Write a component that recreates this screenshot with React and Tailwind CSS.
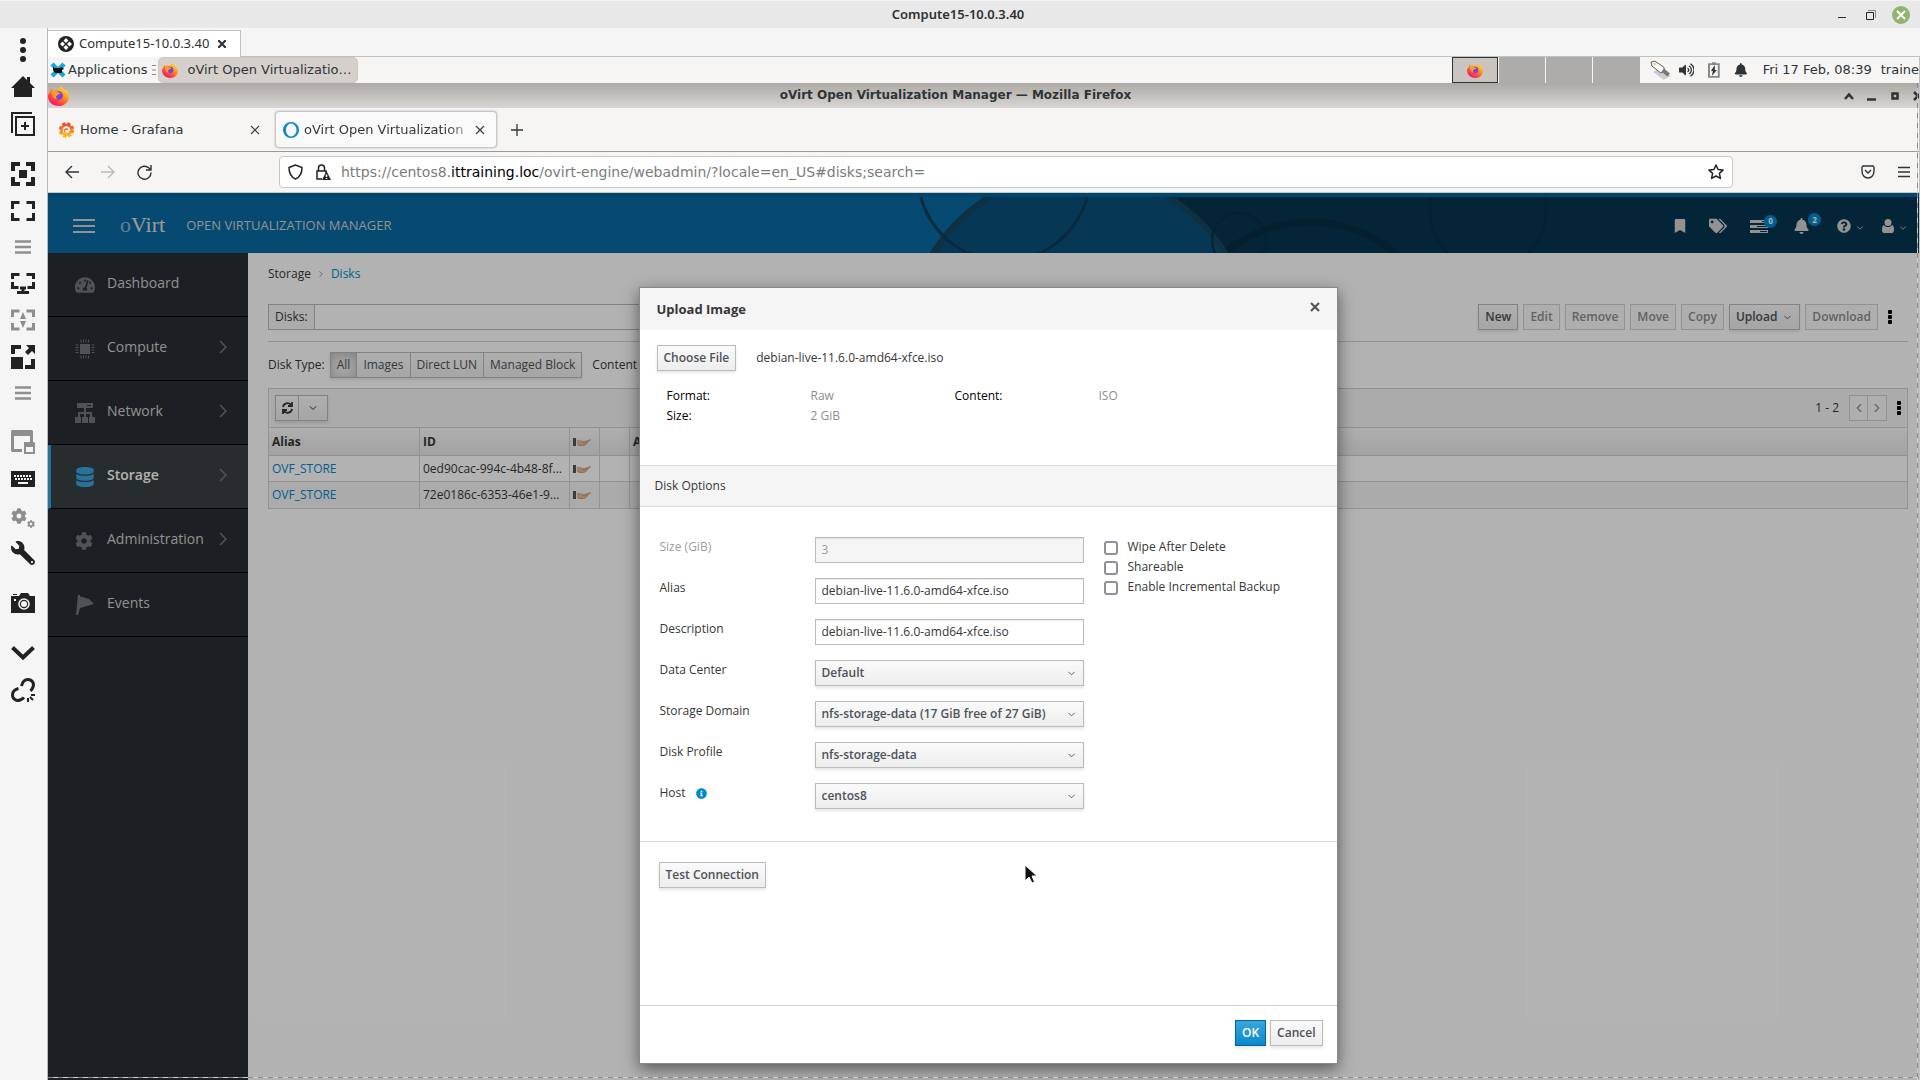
import React, { useState } from 'react';
import {
  FaBell,
  FaBookmark,
  FaCog,
  FaDatabase,
  FaInfoCircle,
  FaQuestionCircle,
  FaTachometerAlt,
  FaTags,
  FaVolumeUp,
  FaWrench,
} from 'react-icons/fa';
import { FiChevronDown, FiChevronLeft, FiChevronRight } from 'react-icons/fi';

const railGroups = [
  ['dots', 'home', 'add'],
  ['focus', 'full', 'lines', 'monitor', 'updown', 'scale', 'lines'],
  ['window', 'keyboard', 'cogs', 'wrench'],
  ['camera'],
  ['down', 'unlink'],
];

const menu = [
  { name: 'Dashboard', arrow: false },
  { name: 'Compute', arrow: true },
  { name: 'Network', arrow: true },
  { name: 'Storage', arrow: true },
  { name: 'Administration', arrow: true },
  { name: 'Events', arrow: false },
];

const disks = [
  { alias: 'OVF_STORE', id: '0ed90cac-994c-4b48-8f...' },
  { alias: 'OVF_STORE', id: '72e0186c-6353-46e1-9...' },
];

const button =
  'h-[26px] border border-[#bbb] bg-linear-to-b from-[#fafafa] to-[#ededed] px-[6px] text-xs font-semibold text-[#4d5258] shadow-[0_2px_3px_rgba(3,3,3,0.1)]';
const buttonOff = 'h-[26px] border border-[#d1d1d1] bg-[#fafafa] px-[6px] text-xs font-semibold text-[#8b8d8f]';

function RailIcon({ name }) {
  if (name === 'camera') {
    return (
      <svg width="24" height="24" viewBox="0 0 24 24" fill="#222">
        <path d="M2 3h4v1H2zM0 5h8l2-3h7l2 3h5v17H0z" />
        <circle cx="13" cy="13" r="5" fill="none" stroke="#f5f5f5" strokeWidth="1.6" />
        <circle cx="13" cy="13" r="3" fill="#f5f5f5" />
        <path fill="#f5f5f5" d="M3 8h2v2H3z" />
      </svg>
    );
  }
  if (name === 'wrench') return <FaWrench className="size-6 -scale-x-100 text-[#222]" />;
  if (name === 'cogs') {
    return (
      <span className="flex w-6 items-end">
        <FaCog className="size-4 shrink-0 self-start text-[#8e8e8e]" />
        <FaCog className="-mb-1 size-2 shrink-0 text-[#8e8e8e]" />
      </span>
    );
  }
  return (
    <svg width="24" height="24" viewBox="0 0 24 24" fill="#222">
      {name === 'dots' && (
        <>
          <circle cx="12" cy="3" r="3" />
          <circle cx="12" cy="12" r="3" />
          <circle cx="12" cy="21" r="3" />
        </>
      )}
      {name === 'home' && <path d="M0 13 12 1l4 4V2h3v6l5 5h-3v9H3v-9z" />}
      {name === 'add' && (
        <path fill="none" stroke="#222" strokeWidth="2" d="M21 1H1v20M5 5h18v18H5zM14 10v8M10 14h8" />
      )}
      {name === 'focus' && (
        <>
          <path d="M8 8h8v8H8z" />
          <path fill="none" stroke="#222" strokeWidth="4" d="M2 9V2h7M15 2h7v7M22 15v7h-7M9 22H2v-7" />
        </>
      )}
      {name === 'full' && (
        <path fill="none" stroke="#222" strokeWidth="3" d="M1.500 10V3.500h7M15.500 3.500h7V10M22.500 14v6.500h-7M8.500 20.500h-7V14" />
      )}
      {name === 'lines' && <path stroke="#8e8e8e" strokeWidth="2.500" d="M4 6.500h16M4 12h16M4 17.500h16" />}
      {name === 'monitor' && (
        <path fill="none" stroke="#222" strokeWidth="3" d="M1.500 8V3.500h7M15.500 3.500h7V8M22.500 11v5.500h-6M7.500 16.500h-6V11M12 16v6M6 21.500h12M9 17h6" />
      )}
      {name === 'updown' && (
        <>
          <path fill="none" stroke="#8e8e8e" strokeWidth="3" d="M1.500 9V3h7M15.500 3h7v6M22.500 15v6h-7M8.500 21h-7v-6" />
          <path fill="#8e8e8e" d="m12 4 3 7H9zM12 20l3-7H9z" />
        </>
      )}
      {name === 'scale' && (
        <>
          <path d="M0 12h12v12H0zM15 0h9v9l-3-3-4 4-3-3 4-4z" />
          <path fill="none" stroke="#222" strokeWidth="4" d="M2 9V2h8M22 14v8h-8" />
        </>
      )}
      {name === 'window' && (
        <>
          <path fill="#8e8e8e" d="M1 0h20l1 1v11h-3V6H3v13h8v3H1l-1-1V1z" />
          <path fill="#8e8e8e" d="M13 12h10l1 1v11H13z" />
          <path fill="#f5f5f5" d="M15 17h7v5h-7z" />
        </>
      )}
      {name === 'keyboard' && (
        <>
          <path d="M0 4h24v16H0z" />
          <path stroke="#f5f5f5" strokeWidth="2" strokeDasharray="2 1" d="M3 9h18M4 12h17" />
          <path fill="#f5f5f5" d="M7 15h10v2H7z" />
        </>
      )}
      {name === 'down' && <path fill="none" stroke="#222" strokeWidth="4" d="m1.500 6.500 10.500 10 10.500-10" />}
      {name === 'unlink' && (
        <>
          <path
            fill="none"
            stroke="#222"
            strokeWidth="3"
            d="M10.500 8C11.500 3.500 14 1.500 17 1.500c4 0 6.500 4 5 7.500-.5 1.500-1.500 3-2.500 4M7.500 10.500C3.500 11.500 1.500 14 1.500 17c0 4 4 6.500 7.500 5 1.500-.5 3-1.500 4-2.500"
          />
          <path stroke="#222" strokeWidth="2" d="M20 17h4M19 19l3 3M17 20v4" />
        </>
      )}
    </svg>
  );
}

function FirefoxIcon({ size }) {
  return (
    <svg width={size} height={size} viewBox="0 0 24 24" className="shrink-0">
      <defs>
        <linearGradient id="fox" x1="0.85" y1="0.1" x2="0.2" y2="1">
          <stop offset="0" stopColor="#ffe23c" />
          <stop offset="0.4" stopColor="#ff8a1e" />
          <stop offset="0.75" stopColor="#ff3647" />
          <stop offset="1" stopColor="#e3157f" />
        </linearGradient>
      </defs>
      <path
        fill="url(#fox)"
        d="M2 8.500 3.500 4l2 2.500 3-1.500 3 1L15.500 1c1 3 3 4 4 5l1-1c2 2.500 3.500 6 3.500 8 0 6.500-5.500 11-12 11S0 19 0 12.500c0-1.500.5-3 2-4z"
      />
      <circle cx="12" cy="12" r="5" fill="#7542e5" />
      <path fill="#ff9a2a" d="M4 7c3-2 6-1 7 1l3 1c0 1.500-2 1.500-3 2 0 1-1.500 1-2 2.500 0 1 1 1.500 2 1.800-3 1-5.500-.5-6-3C4.500 10.500 4 9 4 7z" />
    </svg>
  );
}

function CrossIcon() {
  return (
    <svg width="10" height="10" viewBox="0 0 10 10" fill="none" stroke="#3a3f40" strokeWidth="1.2">
      <path d="m1 1 8 8M9 1 1 9" />
    </svg>
  );
}

function Dots({ className = '' }) {
  return (
    <svg width="4" height="14" viewBox="0 0 4 14" className={className} fill="#030303">
      <rect width="4" height="4" rx="1" />
      <rect y="5" width="4" height="4" rx="1" />
      <rect y="10" width="4" height="4" rx="1" />
    </svg>
  );
}

function Hand() {
  return (
    <svg width="19" height="9" viewBox="0 0 19 9" className="mt-px block">
      <path fill="#555" d="M0 0h3v8H0z" />
      <path fill="#eee" d="M3 1h1v6H3z" />
      <path fill="#e5b893" d="M4 2c3-1 5 1 7 1l7-2c1 1-2 2-3 3-1 2-3 4-7 4L4 7z" />
      <path stroke="#b98560" strokeWidth="0.6" fill="none" d="M9 4c2 1 5 0 8-2M5 7c4 1 8 1 10-3" />
    </svg>
  );
}

function MenuIcon({ name }) {
  if (name === 'Dashboard') return <FaTachometerAlt className="size-5 text-[#72767b]" />;
  if (name === 'Storage') return <FaDatabase className="size-5 text-[#39a5dc]" />;
  if (name === 'Administration') return <FaCog className="size-[18px] text-[#72767b]" />;
  return (
    <svg width="20" height="20" viewBox="0 0 20 20" fill="#72767b">
      {name === 'Compute' && (
        <>
          <path d="M5 5h10v10H5z" />
          <path stroke="#72767b" strokeWidth="3" strokeDasharray="1 1.500" d="M5.500 2h10M5.500 18h10M2 5.500v10M18 5.500v10" />
        </>
      )}
      {name === 'Network' && (
        <>
          <path d="M2 0h16v5H2zM9 5h2v4h6v5h-2v-3h-4v3H9v-3H5v3H3V9h6z" />
          <path d="M0 14h6v6H0zM7 14h6v6H7zM14 14h6v6h-6z" />
          <path fill="#292e34" d="M12 2h4v1h-4z" />
        </>
      )}
      {name === 'Events' && <path d="m3 0 2 0v2c3-1 5 2 9 2l5 5-14 4-2 7H1z" />}
    </svg>
  );
}

function TitleBar() {
  return (
    <header className="flex h-7 shrink-0 items-center border-t border-[#f2f2f2] bg-[#e8e8e8]">
      <h1 className="flex-1 pl-[84px] text-center font-['Noto_Sans',sans-serif] text-[13px] font-semibold text-[#303030]">
        Compute15-10.0.3.40
      </h1>
      <div className="flex w-[88px] items-center justify-end gap-5 pr-[10px]">
        <svg width="8" height="10" viewBox="0 0 8 10" stroke="#303030">
          <path d="M0 7.500h8" />
        </svg>
        <svg width="10" height="10" viewBox="0 0 10 10" fill="none">
          <path stroke="#888" d="M2 .5h7.500V8" />
          <path stroke="#222" d="M.5 2.500h7v7h-7z" />
        </svg>
        <button aria-label="Close window" className="-ml-1 flex size-[18px] items-center justify-center rounded-full bg-[#92b372]">
          <svg width="10" height="10" viewBox="0 0 10 10" stroke="#fff" strokeWidth="1.8">
            <path d="m1 1 8 8M9 1 1 9" />
          </svg>
        </button>
      </div>
    </header>
  );
}

function Rail() {
  return (
    <nav className="flex w-12 shrink-0 flex-col gap-[13px] border-r border-[#b9b9b9] bg-[#f5f5f5] pt-[3px]">
      {railGroups.map((group, i) => (
        <div key={i} className="flex flex-col">
          {group.map((name, j) => (
            <button
              key={j}
              aria-label={name}
              className={`flex items-center justify-center pr-px ${name === 'lines' ? 'h-[35px]' : 'h-[37px]'}`}
            >
              <RailIcon name={name} />
            </button>
          ))}
        </div>
      ))}
    </nav>
  );
}

function SessionTabs() {
  return (
    <div className="flex h-[29px] shrink-0 items-end bg-[#f5f5f5]">
      <div className="flex h-[27px] w-[193px] items-center gap-[5px] border-t border-r border-[#c1c1c1] bg-white pl-[10px] font-['Noto_Sans',sans-serif] text-[13px] text-[#303030]">
        <svg width="16" height="16" viewBox="0 0 16 16" fill="none">
          <circle cx="8" cy="8" r="8" fill="#222" />
          <path fill="#fff" d="m8 2 2.500 2.500L8 7 5.500 4.500zM8 9l2.500 2.500L8 14l-2.500-2.500zM4.500 5.500 7 8l-2.500 2.500L2 8zM11.500 5.500 14 8l-2.500 2.500L9 8z" />
          <path stroke="#222" d="m5.500 5.500 5 5M10.500 5.500l-5 5" />
        </svg>
        <span>Compute15-10.0.3.40</span>
        <button aria-label="Close session" className="ml-1">
          <svg width="8" height="8" viewBox="0 0 8 8" stroke="#333" strokeWidth="2.200">
            <path d="m0 0 8 8M8 0 0 8" />
          </svg>
        </button>
      </div>
      <div className="h-px flex-1 bg-[#c1c1c1]" />
    </div>
  );
}

function DesktopPanel() {
  return (
    <div className="flex h-[26px] shrink-0 items-center bg-[#f6f5f4] text-[13px] text-[#2e3436]">
      <button className="ml-[2px] flex items-center gap-[2px]">
        <svg width="16" height="16" viewBox="0 0 16 16">
          <path stroke="#14a9d8" strokeWidth="4.500" d="m2 2 12 12M14 2 2 14" />
          <path fill="#111" d="m3 4 1 2h6l2-1 2 2-2 1v3H5L3 8z" />
        </svg>
        Applications
      </button>
      <svg width="4" height="10" viewBox="0 0 4 10" className="ml-[5px]" stroke="#888">
        <path d="M0 .5h4M0 5h4M0 9.500h4" />
      </svg>
      <button className="ml-[2px] flex h-[26px] w-[200px] items-center gap-[9px] rounded-[5px] border border-[#cfc8c2] bg-[#d6d0cc] pl-[3px]">
        <FirefoxIcon size={16} />
        oVirt Open Virtualizatio…
      </button>
      <div className="ml-auto flex gap-px">
        <div className="flex h-[26px] w-[46px] items-center justify-center border border-[#2e3436] bg-[#c9c4bf]">
          <FirefoxIcon size={16} />
        </div>
        <div className="h-[26px] w-[46px] bg-[#adacaa]" />
        <div className="h-[26px] w-[46px] bg-[#adacaa]" />
        <div className="h-[26px] w-[47px] bg-[#adacaa]" />
      </div>
      <div className="flex w-[279px] shrink-0 items-center pl-[10px]">
        <svg width="22" height="20" viewBox="0 0 22 20">
          <path fill="#ccc" d="m3 12 9-4 9 8-7 4z" />
          <path fill="#fff" stroke="#555" d="m1 2 4-1 9 6 1 4-4 2L2 6z" />
          <path stroke="#777" strokeWidth="4" d="m13 10 6 5" />
          <path fill="#e8b52c" d="m3 3 3 0-1 3z" />
        </svg>
        <FaVolumeUp className="ml-[7px] size-4" />
        <svg width="12" height="16" viewBox="0 0 12 16" className="ml-[14px]">
          <path fill="none" stroke="#888" strokeWidth="2" d="M1 2h10v13H1zM4 1h4" />
          <path fill="#2e3436" d="M7 3 3 9h2l-1 5 5-6H7z" />
        </svg>
        <FaBell className="ml-[14px] size-[14px]" />
        <span className="ml-[15px] whitespace-nowrap">Fri 17 Feb, 08:39</span>
        <span className="ml-[9px]">traine</span>
      </div>
    </div>
  );
}

function FirefoxChrome() {
  return (
    <div className="shrink-0 text-[#2e3436]">
      <div className="flex h-[25px] items-center bg-linear-to-b from-[#adaaa6] to-[#d9d5d2]">
        <FirefoxIcon size={21} />
        <h2 className="flex-1 pr-[2px] pb-[2px] text-center text-xs font-bold">
          oVirt Open Virtualization Manager — Mozilla Firefox
        </h2>
        <svg width="75" height="10" viewBox="0 0 75 10" fill="none" stroke="#2e3436" strokeWidth="2.500">
          <path d="m1 8 4-4.500L9 8M23 8.500h9M48.500 2.500h5v5h-5zM70 1l8 8M70 9l8-8" />
        </svg>
      </div>
      <div className="flex h-11 items-center border-b border-[#999b97] bg-[#f6f5f4] text-[13px]">
        <div className="flex w-[227px] items-center pl-[10px]">
          <svg width="16" height="16" viewBox="0 0 16 16">
            <defs>
              <linearGradient id="graf" x1="0" y1="0" x2="0" y2="1">
                <stop offset="0" stopColor="#f0502a" />
                <stop offset="1" stopColor="#fcb71c" />
              </linearGradient>
            </defs>
            <circle cx="8.500" cy="8" r="6" fill="none" stroke="url(#graf)" strokeWidth="3.500" strokeDasharray="3 1.700" />
            <circle cx="8.500" cy="8" r="5" fill="none" stroke="url(#graf)" strokeWidth="2.500" />
            <path fill="none" stroke="url(#graf)" strokeWidth="1.300" d="M12 9c-.5 3-5 3.500-5.500.5C6 7 9 6 10 8" />
          </svg>
          <span className="ml-[6px] flex-1">Home - Grafana</span>
          <button aria-label="Close Home - Grafana" className="mr-[15px]">
            <CrossIcon />
          </button>
        </div>
        <div className="flex h-[37px] w-[222px] items-center rounded-sm border border-[#c8c5cd] bg-[#f9f9fa] pl-[7px] shadow-[0_0_2px_#aaa]">
          <svg width="16" height="16" viewBox="0 0 16 16" className="shrink-0">
            <path fill="#0d87ce" fillRule="evenodd" d="M8 0a8 8 0 1 1 0 16A8 8 0 0 1 8 0m0 1.500C5 1.500 3 4.500 3 8s2 6.500 5 6.500 5.500-3 5.500-6.500S11 1.500 8 1.500" />
          </svg>
          <span className="ml-[5px] flex-1 overflow-hidden bg-linear-to-r from-[#2e3436] from-85% to-[#c9c9c9] bg-clip-text whitespace-nowrap text-transparent">
            oVirt Open Virtualization
          </span>
          <button aria-label="Close oVirt" className="mr-[11px] ml-1">
            <CrossIcon />
          </button>
        </div>
        <button aria-label="New tab" className="ml-[13px]">
          <svg width="14" height="14" viewBox="0 0 14 14" stroke="#2e3436">
            <path d="M7 1v12M1 7h12" strokeWidth="1.300" />
          </svg>
        </button>
      </div>
      <div className="flex h-[41px] items-center border-b border-[#ccc8c4] bg-[#f6f5f4] pr-[9px]">
        <div className="flex w-[231px] items-center gap-[22px] pl-[17px]">
          <svg width="14" height="14" viewBox="0 0 14 14" fill="none" stroke="#2e3436" strokeWidth="1.400">
            <path d="M14 7H1M7 1 1 7l6 6" />
          </svg>
          <svg width="14" height="14" viewBox="0 0 14 14" fill="none" stroke="#b9b9b9" strokeWidth="1.400">
            <path d="M0 7h13M7 1l6 6-6 6" />
          </svg>
          <svg width="15" height="15" viewBox="0 0 15 15" fill="none" stroke="#2e3436" strokeWidth="1.400">
            <path d="M14 7.500a6.500 6.500 0 1 1-2-4.500l2 2M14 0v5H9" />
          </svg>
        </div>
        <div className="flex h-8 min-w-0 flex-1 items-center rounded-sm border border-[#cdc7c2] bg-white px-2">
          <svg width="15" height="16" viewBox="0 0 15 16" fill="none" stroke="#222" strokeWidth="1.500">
            <path d="M7.500 1 1 3.500C1 9 3 13 7.500 15 12 13 14 9 14 3.500z" />
          </svg>
          <svg width="16" height="16" viewBox="0 0 16 16" fill="none" stroke="#222" strokeWidth="1.500" className="ml-3">
            <path d="M7 15H2V7h9v2M3.500 7V4a3 3 0 0 1 6 0v3" />
            <path fill="#222" stroke="none" d="m11.500 7 4.500 9H7z" />
            <path stroke="#fff" d="M11.500 10.500v2.500M11.500 14v1" />
          </svg>
          <p className="ml-[10px] flex-1 text-sm text-[#7b7b7b]">
            https://centos8.<span className="text-black">ittraining.loc</span>/ovirt-engine/webadmin/?locale=en_US#disks;search=
          </p>
          <svg width="16" height="16" viewBox="0 0 16 16" fill="none" stroke="#222" strokeWidth="1.500" strokeLinejoin="round">
            <path d="m8 1 2.100 4.500 4.900.6-3.600 3.300 1 5L8 12l-4.400 2.400 1-5L1 6.100l4.900-.6z" />
          </svg>
        </div>
        <div className="flex w-[177px] items-center justify-end gap-[23px]">
          <svg width="14" height="14" viewBox="0 0 14 14" fill="none" stroke="#2e3436" strokeWidth="1.400">
            <path d="M2 1h10l1 1v4c0 4-2.500 7-6 7S1 10 1 6V2zM4 5l3 3 3-3" />
          </svg>
          <svg width="12" height="12" viewBox="0 0 12 12" stroke="#2e3436" strokeWidth="1.300">
            <path d="M0 1.500h12M0 6h12M0 10.500h12" />
          </svg>
        </div>
      </div>
    </div>
  );
}

function Badge({ children }) {
  return (
    <span className="absolute -top-[5px] left-[14px] flex size-[13px] items-center justify-center rounded-full bg-[#0088ce] text-[8px] font-bold text-white">
      {children}
    </span>
  );
}

function Masthead() {
  return (
    <div className="relative flex h-[60px] shrink-0 items-center border-t-4 border-[#00669c] bg-[#0b6aa3] pt-[2px] pr-[11px] pl-[25px] text-[#d1d1d1]">
      <svg width="1010" height="56" viewBox="909 197 1010 56" className="absolute top-0 right-0">
        <path fill="#063650" d="M1079 197h840v56h-840z" />
        <circle cx="1310" cy="355" r="133" fill="none" stroke="#062d45" strokeWidth="7" />
        <circle cx="1488" cy="211" r="58" fill="none" stroke="#062f47" strokeWidth="2.500" />
        <circle cx="1079" cy="344" r="172" fill="#09517c" stroke="#184660" strokeWidth="6" />
        <circle cx="1239" cy="240" r="27" fill="none" stroke="#062e46" strokeWidth="2.500" opacity="0.8" />
        <circle cx="1004" cy="175" r="86" fill="none" stroke="#0c3d5c" strokeWidth="3" />
      </svg>
      <button aria-label="Toggle menu">
        <svg width="22" height="14" viewBox="0 0 22 14" stroke="#d1d1d1" strokeWidth="2">
          <path d="M0 1h22M0 7h22M0 13h22" />
        </svg>
      </button>
      <a href="#home" className="ml-[25px] flex items-center gap-[21px]">
        <span className="-mt-1 font-['Liberation_Serif',serif] text-[22px] text-[#e0e0e0]">
          <span className="text-[#8fb6d4]">o</span>Virt
        </span>
        <span className="text-[13px]">OPEN VIRTUALIZATION MANAGER</span>
      </a>
      <div className="relative ml-auto flex items-center gap-[23px]">
        <FaBookmark className="h-[14px] w-3" />
        <FaTags className="h-4 w-[18px]" />
        <span className="relative">
          <svg width="18" height="13" viewBox="0 0 18 13" fill="#d1d1d1">
            <path d="M0 0h18v3H0zM0 5h18v3H0zM0 10h18v3H0z" />
            <path stroke="#063650" d="M12 1.500h5M7 6.500h10M10 11.500h7" />
          </svg>
          <Badge>0</Badge>
        </span>
        <span className="relative ml-[3px]">
          <FaBell className="h-4 w-[15px]" />
          <Badge>2</Badge>
        </span>
        <span className="ml-[5px] flex items-center gap-1">
          <FaQuestionCircle className="size-[14px]" />
          <FiChevronDown className="mt-1 size-[10px]" />
        </span>
        <span className="-ml-[6px] flex items-center gap-1">
          <svg width="12" height="14" viewBox="0 0 12 14" fill="#d1d1d1">
            <circle cx="6" cy="3.500" r="3.500" />
            <path d="M2 6c1 1.500 2.500 2 4 2s3-.5 4-2c2 .5 2 3 2 5 0 1.500-.5 3-2 3H2c-1.500 0-2-1.500-2-3 0-2 0-4.500 2-5" />
          </svg>
          <FiChevronDown className="mt-1 size-[10px]" />
        </span>
      </div>
    </div>
  );
}

function SideMenu() {
  return (
    <nav className="w-[200px] shrink-0 bg-[#292e34]">
      {menu.map(({ name, arrow }) => (
        <a
          key={name}
          href={`#${name.toLowerCase()}`}
          className={`flex h-16 items-center border-b border-[#050505] pr-[21px] text-sm ${
            name === 'Storage'
              ? 'border-l-3 border-l-[#39a5dc] bg-[#393f44] pl-[24px] font-semibold text-white'
              : 'pl-[27px] text-[#d1d1d1]'
          }`}
        >
          <span className="flex w-[32px] items-center">
            <MenuIcon name={name} />
          </span>
          <span className="-mt-1 flex-1">{name}</span>
          {arrow && (
            <svg width="8" height="14" viewBox="0 0 8 14" fill="none" stroke="#72767b" strokeWidth="1.500" className="-mt-1">
              <path d="m1 1 6 6-6 6" />
            </svg>
          )}
        </a>
      ))}
    </nav>
  );
}

function DisksPage() {
  return (
    <main className="min-w-0 flex-1 bg-white pt-[11px] pr-[11px] pl-5 text-xs text-[#363636]">
      <div className="flex h-5 items-center">
        <span>Storage</span>
        <FiChevronRight className="mx-[5px] size-[10px] text-[#888]" />
        <a href="#disks" className="text-[#0088ce]">
          Disks
        </a>
      </div>

      <div className="mt-5 flex items-center justify-between border-b border-[#d1d1d1] pb-[11px]">
        <div className="flex h-[26px] w-[600px]">
          <label htmlFor="search" className="flex items-center border border-[#bbb] bg-[#f5f5f5] px-[6px]">
            Disks:
          </label>
          <input id="search" className="min-w-0 flex-1 border border-l-0 border-[#bbb] px-2" />
        </div>
        <div className="flex items-center gap-[5px]">
          <button className={button}>New</button>
          <button className={buttonOff}>Edit</button>
          <button className={buttonOff}>Remove</button>
          <button className={buttonOff}>Move</button>
          <button className={buttonOff}>Copy</button>
          <button className={`${button} flex items-center gap-[5px]`}>
            Upload
            <FiChevronDown className="size-[11px]" />
          </button>
          <button className={buttonOff}>Download</button>
          <button aria-label="More actions" className="mr-4 ml-[5px]">
            <Dots />
          </button>
        </div>
      </div>

      <div className="mt-[10px] flex items-center">
        <span>Disk Type:</span>
        <div className="ml-[5px] flex h-[26px] divide-x divide-[#bbb] border border-[#bbb] bg-linear-to-b from-[#fafafa] to-[#ededed] text-[#4d5258] shadow-[0_2px_3px_rgba(3,3,3,0.1)]">
          <button className="bg-[#e8e8e8] px-[6px] shadow-[inset_0_2px_8px_rgba(3,3,3,0.2)]">All</button>
          <button className="px-[6px]">Images</button>
          <button className="px-[6px]">Direct LUN</button>
          <button className="px-[6px]">Managed Block</button>
        </div>
        <span className="ml-[10px]">Content</span>
      </div>

      <div className="mt-[10px] flex h-[39px] items-center border border-b-0 border-[#d1d1d1] bg-[#f5f5f5] px-[6px]">
        <div className="flex h-[26px] divide-x divide-[#bbb] border border-[#bbb] bg-linear-to-b from-[#fafafa] to-[#ededed] text-[#363636] shadow-[0_2px_3px_rgba(3,3,3,0.1)]">
          <button aria-label="Refresh" className="flex w-[23px] items-center justify-center">
            <svg width="11" height="12" viewBox="0 0 11 12" fill="none" stroke="#363636" strokeWidth="1.800">
              <path d="M1 5a4.500 4.500 0 0 1 8-2M10 7a4.500 4.500 0 0 1-8 2M10 0v4H6M1 12V8h4" />
            </svg>
          </button>
          <button aria-label="Refresh interval" className="flex w-7 items-center justify-center">
            <FiChevronDown className="size-3" />
          </button>
        </div>
        <span className="mr-[10px] ml-auto">1 - 2</span>
        <div className="flex h-[26px] divide-x divide-[#d1d1d1] border border-[#d1d1d1] bg-[#fafafa] text-[#8b8d8f]">
          <button aria-label="Previous page" className="flex w-[18px] items-center justify-center">
            <FiChevronLeft className="size-[14px]" />
          </button>
          <button aria-label="Next page" className="flex w-[18px] items-center justify-center">
            <FiChevronRight className="size-[14px]" />
          </button>
        </div>
        <button aria-label="Columns" className="ml-[10px]">
          <Dots />
        </button>
      </div>
      <table className="w-full table-fixed border-collapse border border-[#d1d1d1] text-left">
        <colgroup>
          <col className="w-[151px]" />
          <col className="w-[150px]" />
          <col className="w-[30px]" />
          <col className="w-[30px]" />
          <col />
        </colgroup>
        <thead>
          <tr className="h-7 bg-linear-to-b from-[#fafafa] to-[#e8e8e8]">
            <th className="border-r border-[#d1d1d1] px-[3px]">Alias</th>
            <th className="border-r border-[#d1d1d1] px-[3px]">ID</th>
            <th className="border-r border-[#d1d1d1] px-[3px]">
              <Hand />
            </th>
            <th className="border-r border-[#d1d1d1]" />
            <th className="px-[3px]">A</th>
          </tr>
        </thead>
        <tbody>
          {disks.map((disk) => (
            <tr key={disk.id} className="h-[26px] border-t border-[#d1d1d1] last:h-[27px] last:bg-[#f5f5f5]">
              <td className="border-r border-[#d1d1d1] px-[3px]">
                <a href={`#${disk.id}`} className="text-[#0088ce]">
                  {disk.alias}
                </a>
              </td>
              <td className="border-r border-[#d1d1d1] px-[3px] whitespace-nowrap">{disk.id}</td>
              <td className="border-r border-[#d1d1d1] px-[3px]">
                <Hand />
              </td>
              <td className="border-r border-[#d1d1d1]" />
              <td />
            </tr>
          ))}
        </tbody>
      </table>
    </main>
  );
}

function Field({ id, label, children }) {
  return (
    <div className="flex h-[26px] items-start">
      <label htmlFor={id} className={`flex w-[155px] items-center gap-[10px] leading-5 ${id === 'size' ? 'text-[#9c9c9c]' : ''}`}>
        {label}
        {id === 'host' && <FaInfoCircle className="size-[11px] text-[#0088ce]" />}
      </label>
      {children}
    </div>
  );
}

function Select({ id, option }) {
  return (
    <div className="relative w-[269px]">
      <select id={id} className={`${button} w-full appearance-none`}>
        <option>{option}</option>
      </select>
      <FiChevronDown className="pointer-events-none absolute top-2 right-[7px] size-[11px] text-[#4d5258]" />
    </div>
  );
}

function UploadDialog() {
  const [alias, setAlias] = useState('debian-live-11.6.0-amd64-xfce.iso');
  const [description, setDescription] = useState('debian-live-11.6.0-amd64-xfce.iso');
  const input = 'h-[26px] w-[269px] border border-[#bbb] px-[6px] pb-[2px] shadow-[inset_0_1px_1px_rgba(3,3,3,0.08)]';

  return (
    <div
      role="dialog"
      aria-label="Upload Image"
      className="flex w-[699px] flex-col border border-[#888] bg-white text-xs text-[#363636] shadow-[0_5px_15px_rgba(0,0,0,0.5)]"
    >
      <div className="flex h-[42px] shrink-0 items-center justify-between bg-[#f5f5f5] pr-[17px] pl-[17px]">
        <h3 className="pt-[2px] text-[13px] font-bold">Upload Image</h3>
        <button aria-label="Close dialog" className="-mt-1">
          <svg width="10" height="10" viewBox="0 0 10 10" stroke="#555" strokeWidth="2.200">
            <path d="m1 1 8 8M9 1 1 9" />
          </svg>
        </button>
      </div>

      <div className="flex items-center gap-5 pt-[15px] pl-[17px]">
        <button className={button}>Choose File</button>
        <span>debian-live-11.6.0-amd64-xfce.iso</span>
      </div>
      <dl className="mt-[15px] grid grid-cols-[repeat(4,144px)] pl-[27px] leading-5">
        <dt className="text-black">Format:</dt>
        <dd className="text-[#8b8d8f]">Raw</dd>
        <dt className="text-black">Content:</dt>
        <dd className="text-[#8b8d8f]">ISO</dd>
        <dt className="text-black">Size:</dt>
        <dd className="text-[#8b8d8f]">2 GiB</dd>
      </dl>

      <h4 className="mt-[39px] flex h-[42px] items-center border-y border-[#dcdcdc] bg-[#f5f5f5] pl-[15px]">Disk Options</h4>
      <div className="flex gap-5 border-b border-[#dcdcdc] pt-[30px] pb-8 pl-5">
        <div className="flex flex-col gap-[15px]">
          <Field id="size" label="Size (GiB)">
            <input id="size" disabled value="3" readOnly className={`${input} bg-[#f5f5f5] text-[#9c9c9c]`} />
          </Field>
          <Field id="alias" label="Alias">
            <input id="alias" value={alias} onChange={(e) => setAlias(e.target.value)} className={input} />
          </Field>
          <Field id="description" label="Description">
            <input id="description" value={description} onChange={(e) => setDescription(e.target.value)} className={input} />
          </Field>
          <Field id="center" label="Data Center">
            <Select id="center" option="Default" />
          </Field>
          <Field id="domain" label="Storage Domain">
            <Select id="domain" option="nfs-storage-data (17 GiB free of 27 GiB)" />
          </Field>
          <Field id="profile" label="Disk Profile">
            <Select id="profile" option="nfs-storage-data" />
          </Field>
          <Field id="host" label="Host">
            <Select id="host" option="centos8" />
          </Field>
        </div>
        <div>
          {['Wipe After Delete', 'Shareable', 'Enable Incremental Backup'].map((text) => (
            <label key={text} className="flex h-5 items-center gap-[10px]">
              <input
                type="checkbox"
                className="mt-[2px] size-[14px] appearance-none rounded-[3px] border-2 border-[#8f8f9d] bg-white checked:bg-[#0088ce]"
              />
              {text}
            </label>
          ))}
        </div>
      </div>
      <div className="flex-1 pt-5 pl-[19px]">
        <button className={button}>Test Connection</button>
      </div>
      <div className="flex justify-end gap-1 border-t border-[#d1d1d1] pt-[14px] pr-[14px] pb-[17px]">
        <button className="h-[26px] border border-[#00659c] bg-linear-to-b from-[#39a5dc] to-[#0088ce] px-[6px] font-semibold text-white shadow-[0_2px_3px_rgba(3,3,3,0.1)]">
          OK
        </button>
        <button className={button}>Cancel</button>
      </div>
    </div>
  );
}

function App() {
  return (
    <div className="flex h-screen flex-col overflow-hidden font-['DejaVu_Sans',sans-serif]">
      <TitleBar />
      <div className="flex min-h-0 flex-1">
        <Rail />
        <div className="flex min-w-0 flex-1 flex-col">
          <SessionTabs />
          <div className="relative flex min-h-0 flex-1 flex-col overflow-hidden border-r border-[#c1c1c1]">
            <DesktopPanel />
            <FirefoxChrome />
            <div className="relative flex min-h-0 flex-1 flex-col font-['Open_Sans',sans-serif]">
              <Masthead />
              <div className="flex min-h-0 flex-1">
                <SideMenu />
                <DisksPage />
              </div>
              <div className="absolute inset-0 flex justify-center bg-black/30 pt-[94px] pb-4 pl-[9px]">
                <UploadDialog />
              </div>
            </div>
            <div className="pointer-events-none absolute top-[26px] right-px bottom-0 w-px bg-[repeating-linear-gradient(to_bottom,#8a8a8a_0_5px,#cfcfcf_5px_10px)]" />
            <div className="pointer-events-none absolute inset-x-0 bottom-[2px] h-px bg-[repeating-linear-gradient(to_right,#8a8a8a_0_5px,#cfcfcf_5px_10px)]" />
            <svg width="14" height="20" viewBox="0 0 14 20" className="pointer-events-none absolute top-[807px] left-[976px]">
              <path fill="#111" stroke="#fff" d="M1 1v16l4-4 3 6 2.500-1.200L8 12h5z" />
            </svg>
          </div>
        </div>
      </div>
    </div>
  );
}

export default App;
